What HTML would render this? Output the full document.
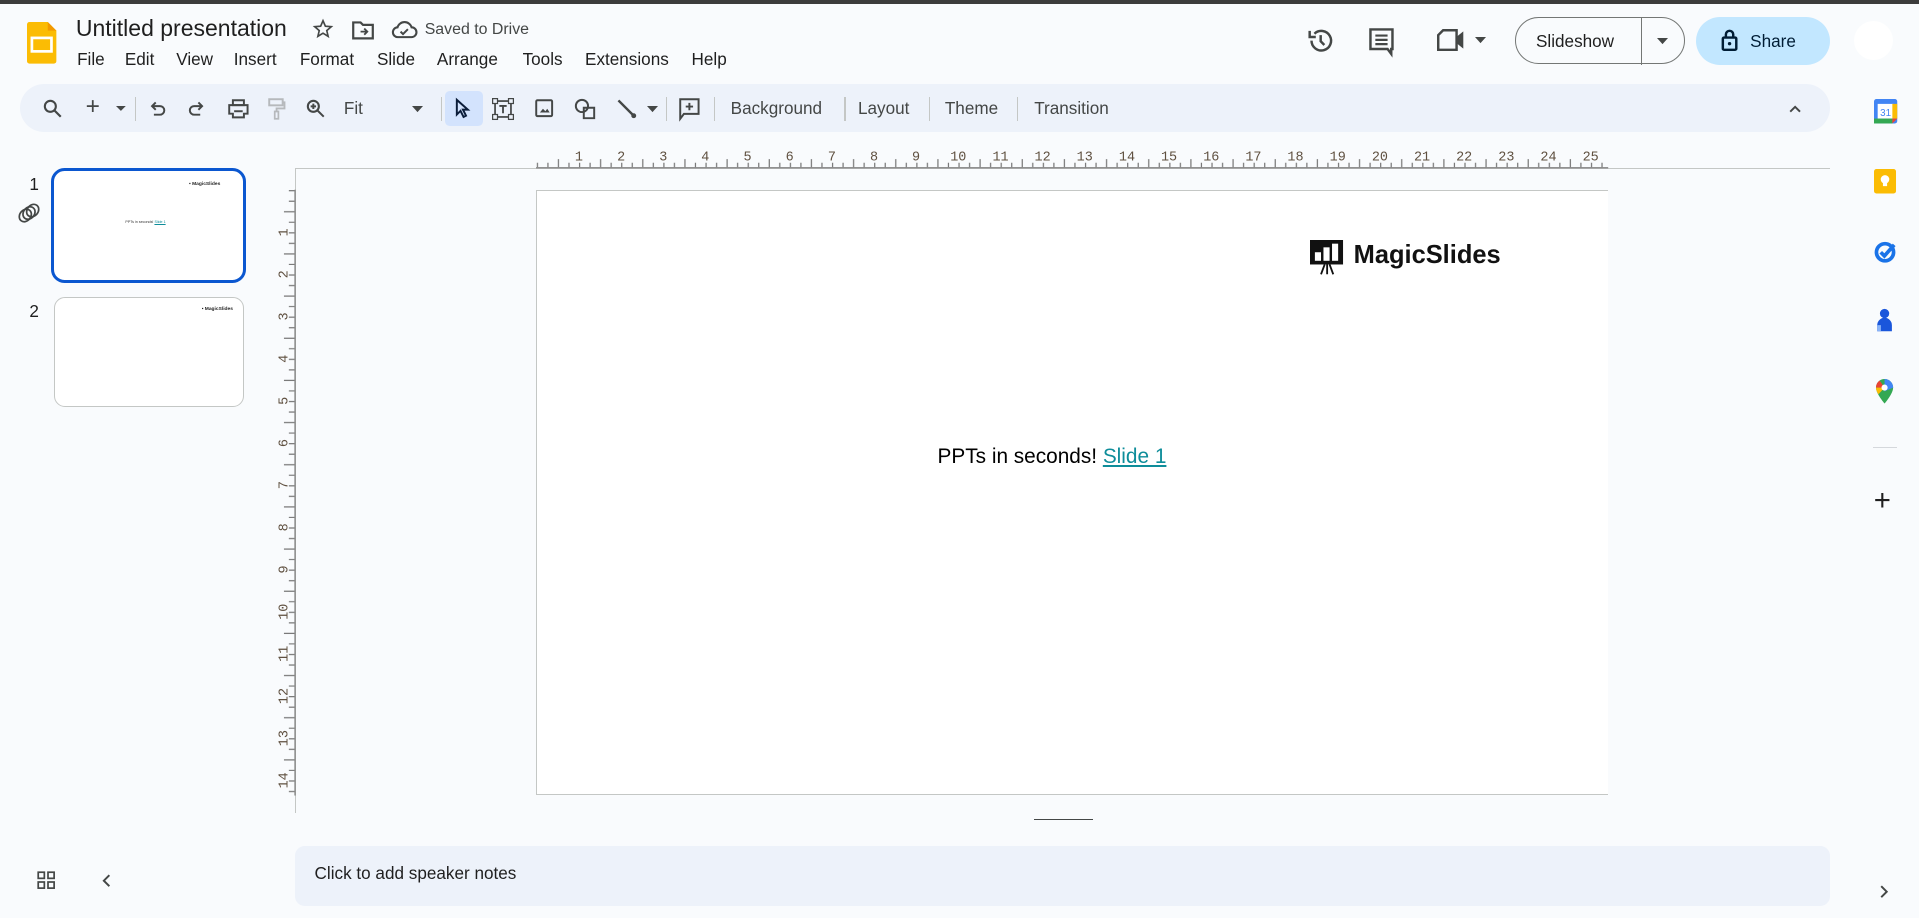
<!DOCTYPE html>
<html><head><meta charset="utf-8"><style>
html,body{margin:0;padding:0;overflow:hidden;background:#f9fbfd;}
#w{position:relative;width:1568px;height:750px;zoom:1.2239;font-family:"Liberation Sans",Arial,sans-serif;color:#1f1f1f;background:#f9fbfd;overflow:hidden}
.a{position:absolute}
.menu span{position:absolute;top:40px;font-size:14px;color:#1f1f1f}
.tb{position:absolute;left:16px;top:69px;width:1479px;height:39px;background:#edf2fa;border-radius:20px}
.dv{position:absolute;top:79px;width:1px;height:20px;background:#c4c7c5}
.tt{position:absolute;top:80px;font-size:14px;color:#444746}
svg{position:absolute;overflow:visible}
</style></head><body><div id="w">
<div class="a" style="left:0;top:0;width:1568px;height:3px;background:#3c3c3c"></div>
<svg style="left:22px;top:18px" width="24" height="34" viewBox="0 0 24 34"><path d="M0 2a2 2 0 0 1 2-2h15l7 7v25a2 2 0 0 1-2 2H2a2 2 0 0 1-2-2z" fill="#fbbc04"/><path d="M17 0v7h7z" fill="#f29900"/><rect x="4" y="13" width="16" height="11" fill="none" stroke="#fff" stroke-width="2.2"/></svg>
<div class="a" style="left:62px;top:12px;font-size:18.8px;color:#1f1f1f">Untitled presentation</div>
<svg style="left:255px;top:15px" width="18" height="18" viewBox="0 0 24 24"><path d="M12 3l2.6 6 6.4.5-4.9 4.2 1.5 6.3L12 16.6 6.4 20l1.5-6.3L3 9.5 9.4 9z" fill="none" stroke="#444746" stroke-width="1.8"/></svg>
<svg style="left:288px;top:16px" width="18" height="16" viewBox="0 0 18 16"><path d="M1 2h6l2 2h8v11H1z" fill="none" stroke="#444746" stroke-width="1.8"/><path d="M7 9.5h5M10 7l2.5 2.5L10 12" fill="none" stroke="#444746" stroke-width="1.5"/></svg>
<svg style="left:320px;top:16px" width="20" height="16" viewBox="0 0 20 16"><path d="M5 14a4 4 0 0 1-.5-8A6 6 0 0 1 16 6a4 4 0 0 1 0 8z" fill="none" stroke="#444746" stroke-width="1.7"/><path d="M7 9.5l2 2 4-4" fill="none" stroke="#444746" stroke-width="1.6"/></svg>
<div class="a" style="left:347px;top:17px;font-size:13px;color:#444746">Saved to Drive</div>
<div class="menu"><span style="left:63px">File</span><span style="left:102px">Edit</span><span style="left:144px">View</span><span style="left:191px">Insert</span><span style="left:245px">Format</span><span style="left:308px">Slide</span><span style="left:357px">Arrange</span><span style="left:427px">Tools</span><span style="left:478px">Extensions</span><span style="left:565px">Help</span></div>
<svg style="left:1067px;top:21px" width="24" height="24" viewBox="0 0 24 24"><path d="M4.5 12a8 8 0 1 0 2.4-5.7" fill="none" stroke="#444746" stroke-width="2"/><path d="M3 4v5h5" fill="none" stroke="#444746" stroke-width="2"/><path d="M12 7.5v5l3 3" fill="none" stroke="#444746" stroke-width="2"/></svg>
<svg style="left:1118px;top:22px" width="22" height="24" viewBox="0 0 22 24"><path d="M2 2h18v16h-1v4l-3-4H2z" fill="none" stroke="#444746" stroke-width="2"/><path d="M6 7h10M6 10.5h10M6 14h10" stroke="#444746" stroke-width="1.8"/></svg>
<svg style="left:1174px;top:24px" width="26" height="18" viewBox="0 0 26 18"><path d="M5 1h11v16H1V5z" fill="none" stroke="#444746" stroke-width="2"/><path d="M16 7l5-4v12l-5-4" fill="#444746" stroke="#444746" stroke-width="1"/></svg>
<svg style="left:1205px;top:30px" width="9" height="5"><path d="M0 0h9L4.5 5z" fill="#444746"/></svg>
<div class="a" style="left:1238px;top:14px;width:137px;height:37px;border:1px solid #747775;border-radius:20px"></div>
<div class="a" style="left:1341px;top:14px;width:1px;height:39px;background:#747775"></div>
<div class="a" style="left:1255px;top:25px;font-size:14px;color:#1f1f1f">Slideshow</div>
<svg style="left:1354px;top:31px" width="9" height="5"><path d="M0 0h9L4.5 5z" fill="#444746"/></svg>
<div class="a" style="left:1386px;top:14px;width:109px;height:39px;background:#c2e7ff;border-radius:20px"></div>
<svg style="left:1406px;top:24px" width="14" height="18" viewBox="0 0 14 18"><rect x="1.5" y="7" width="11" height="10" rx="1" fill="none" stroke="#001d35" stroke-width="2"/><path d="M4 7V4.5a3 3 0 0 1 6 0V7" fill="none" stroke="#001d35" stroke-width="2"/><circle cx="7" cy="12" r="1.4" fill="#001d35"/></svg>
<div class="a" style="left:1430px;top:25px;font-size:14px;color:#001d35">Share</div>
<div class="a" style="left:1515px;top:17px;width:32px;height:32px;border-radius:50%;background:#fff"></div>
<div class="tb"></div>
<svg style="left:35px;top:81px" width="16" height="16" viewBox="0 0 16 16"><circle cx="6" cy="6" r="4.5" fill="none" stroke="#444746" stroke-width="1.7"/><path d="M9.5 9.5l5 5" stroke="#444746" stroke-width="1.8"/></svg>
<div class="a" style="left:70px;top:78px;font-size:20px;color:#444746;line-height:20px">+</div>
<svg style="left:95px;top:87px" width="8" height="4"><path d="M0 0h8L4 4z" fill="#444746"/></svg>
<div class="dv" style="left:110px"></div>
<svg style="left:122px;top:82px" width="14" height="14" viewBox="0 0 14 14"><path d="M3 5h6a3.5 3.5 0 0 1 0 7H4" fill="none" stroke="#444746" stroke-width="1.6"/><path d="M5.5 2L2.5 5l3 3" fill="none" stroke="#444746" stroke-width="1.6"/></svg>
<svg style="left:154px;top:82px" width="14" height="14" viewBox="0 0 14 14"><path d="M11 5H5a3.5 3.5 0 0 0 0 7h5" fill="none" stroke="#444746" stroke-width="1.6"/><path d="M8.5 2l3 3-3 3" fill="none" stroke="#444746" stroke-width="1.6"/></svg>
<svg style="left:186px;top:81px" width="17" height="16" viewBox="0 0 17 16"><path d="M4 1h9v4H4z" fill="none" stroke="#444746" stroke-width="1.6"/><path d="M1 5h15v7h-3v3H4v-3H1z" fill="none" stroke="#444746" stroke-width="1.6"/><path d="M5 10h7" stroke="#444746" stroke-width="1.6"/></svg>
<svg style="left:219px;top:80px" width="14" height="18" viewBox="0 0 14 18"><rect x="1" y="1" width="11" height="5" fill="none" stroke="#b6b9bc" stroke-width="1.6"/><path d="M12 3.5h1.5v5H7v3" fill="none" stroke="#b6b9bc" stroke-width="1.5"/><rect x="5.5" y="11" width="3" height="6" fill="none" stroke="#b6b9bc" stroke-width="1.4"/></svg>
<svg style="left:250px;top:81px" width="16" height="16" viewBox="0 0 16 16"><circle cx="6" cy="6" r="4.5" fill="none" stroke="#444746" stroke-width="1.7"/><path d="M9.5 9.5l5 5M6 3.8v4.4M3.8 6h4.4" stroke="#444746" stroke-width="1.6"/></svg>
<div class="tt" style="left:281px;color:#444746">Fit</div>
<svg style="left:337px;top:87px" width="9" height="5"><path d="M0 0h9L4.5 5z" fill="#444746"/></svg>
<div class="dv" style="left:360px"></div>
<div class="a" style="left:364px;top:74px;width:31px;height:29px;background:#d3e3fd;border-radius:4px"></div>
<svg style="left:372px;top:80px" width="12" height="17" viewBox="0 0 12 17"><path d="M1.5 1.5v12l3-3 2.5 5 2-1-2.5-5h4z" fill="none" stroke="#0b1d3a" stroke-width="1.6"/></svg>
<svg style="left:402px;top:80px" width="18" height="18" viewBox="0 0 18 18"><rect x="2.5" y="2.5" width="13" height="13" fill="none" stroke="#444746" stroke-width="1.4"/><rect x="0.5" y="0.5" width="4" height="4" fill="#edf2fa" stroke="#444746"/><rect x="13.5" y="0.5" width="4" height="4" fill="#edf2fa" stroke="#444746"/><rect x="0.5" y="13.5" width="4" height="4" fill="#edf2fa" stroke="#444746"/><rect x="13.5" y="13.5" width="4" height="4" fill="#edf2fa" stroke="#444746"/><path d="M6 6.5h6M9 6.5v6" stroke="#444746" stroke-width="1.5"/></svg>
<svg style="left:437px;top:81px" width="15" height="15" viewBox="0 0 15 15"><rect x="1" y="1" width="13" height="13" rx="1" fill="none" stroke="#444746" stroke-width="1.6"/><path d="M4 11l2.5-3 2 2 1.5-2 2 3z" fill="#444746"/></svg>
<svg style="left:469px;top:80px" width="18" height="18" viewBox="0 0 18 18"><circle cx="6.5" cy="6.5" r="5" fill="none" stroke="#444746" stroke-width="1.6"/><path d="M8 11.5V8h8.5v8.5H8z" fill="none" stroke="#444746" stroke-width="1.6"/></svg>
<svg style="left:503px;top:80px" width="17" height="17" viewBox="0 0 17 17"><path d="M2 2l13 13" stroke="#444746" stroke-width="2"/><circle cx="14.5" cy="14.5" r="2" fill="#444746"/></svg>
<svg style="left:529px;top:87px" width="9" height="5"><path d="M0 0h9L4.5 5z" fill="#444746"/></svg>
<div class="dv" style="left:544px"></div>
<svg style="left:555px;top:80px" width="17" height="18" viewBox="0 0 17 18"><path d="M1 1h15v12H4l-3 4z" fill="none" stroke="#444746" stroke-width="1.6"/><path d="M8.5 4v6M5.5 7h6" stroke="#444746" stroke-width="1.6"/></svg>
<div class="dv" style="left:583px"></div>
<div class="tt" style="left:597px">Background</div>
<div class="dv" style="left:690px"></div>
<div class="tt" style="left:701px">Layout</div>
<div class="dv" style="left:759px"></div>
<div class="tt" style="left:772px">Theme</div>
<div class="dv" style="left:831px"></div>
<div class="tt" style="left:845px">Transition</div>
<svg style="left:1462px;top:86px" width="10" height="6"><path d="M1 5.5L5 1.5l4 4" fill="none" stroke="#444746" stroke-width="1.6"/></svg>
<svg style="left:1531px;top:81px" width="19" height="20" viewBox="0 0 19 20"><rect x="0" y="0" width="19" height="20" rx="2" fill="#4285f4"/><rect x="3" y="4" width="13" height="12" fill="#fff"/><rect x="0" y="16" width="15" height="4" fill="#34a853"/><rect x="15" y="4" width="4" height="12" fill="#fbbc04"/><path d="M15 16h4l-4 4z" fill="#ea4335"/><text x="9.5" y="14" font-size="8" text-anchor="middle" fill="#4285f4" font-family="Liberation Sans">31</text></svg>
<svg style="left:1531px;top:138px" width="18" height="20" viewBox="0 0 18 20"><rect width="18" height="20" rx="2" fill="#fbbc04"/><circle cx="9" cy="8.5" r="3.5" fill="#fff"/><rect x="7.3" y="11.5" width="3.4" height="2.5" fill="#fff"/></svg>
<svg style="left:1531px;top:196px" width="19" height="19" viewBox="0 0 19 19"><circle cx="9" cy="10" r="7" fill="none" stroke="#1a73e8" stroke-width="3"/><path d="M5.5 10l3 3 8-9" fill="none" stroke="#1a73e8" stroke-width="3"/></svg>
<svg style="left:1533px;top:252px" width="14" height="20" viewBox="0 0 14 20"><circle cx="7" cy="4.5" r="3.8" fill="#1a56db"/><path d="M1 19v-5a5 5 0 0 1 12 0v5z" fill="#1a56db"/><path d="M1 14h3v5H1z" fill="#8ab4f8"/></svg>
<svg style="left:1533px;top:310px" width="14" height="20" viewBox="0 0 14 20"><path d="M7 0a7 7 0 0 1 7 7c0 5-7 13-7 13S0 12 0 7a7 7 0 0 1 7-7z" fill="#34a853"/><path d="M7 0a7 7 0 0 1 7 7l-7 3z" fill="#4285f4"/><path d="M0 7a7 7 0 0 1 3-5.7L7 7z" fill="#ea4335"/><path d="M0 7c0 2 1 4 2 5.5L7 7z" fill="#fbbc04"/><circle cx="7" cy="7" r="2.5" fill="#fff"/></svg>
<div class="a" style="left:1530px;top:365px;width:20px;height:1px;background:#d5d8dc"></div>
<div class="a" style="left:1531px;top:397px;font-size:24px;line-height:24px;color:#1f1f1f">+</div>
<svg style="left:1536px;top:723px" width="7" height="11"><path d="M1 1l4.5 4.5L1 10" fill="none" stroke="#444746" stroke-width="1.6"/></svg>
<div class="a" style="left:24px;top:142px;font-size:14px">1</div>
<svg style="left:15px;top:165px" width="18" height="18" viewBox="0 0 18 18"><g fill="none" stroke="#444746" stroke-width="1.4"><ellipse cx="6" cy="11" rx="4.5" ry="5.5" transform="rotate(40 6 11)"/><ellipse cx="9" cy="9" rx="4.5" ry="5.5" transform="rotate(40 9 9)"/><ellipse cx="12" cy="7" rx="4.5" ry="5.5" transform="rotate(40 12 7)"/></g></svg>
<div class="a" style="left:42px;top:137px;width:154px;height:89px;border:2.5px solid #0b57d0;border-radius:11px;background:#fff;overflow:hidden">
<div class="a" style="left:110px;top:9px;font-size:4px;font-weight:bold">▪ MagicSlides</div>
<div class="a" style="left:58px;top:40px;font-size:3px;color:#333">PPTs in seconds! <span style="color:#0e8d9a;text-decoration:underline">Slide 1</span></div></div>
<div class="a" style="left:24px;top:246px;font-size:14px">2</div>
<div class="a" style="left:44px;top:243px;width:154px;height:88px;border:1px solid #c4c7c5;border-radius:9px;background:#fff;overflow:hidden">
<div class="a" style="left:120px;top:7px;font-size:4px;font-weight:bold">▪ MagicSlides</div></div>
<div class="a" style="left:241px;top:137px;width:1254px;height:1px;background:#c4c7c5"></div>
<div class="a" style="left:241px;top:137px;width:1px;height:527px;background:#c4c7c5"></div>
<div class="a" style="left:438px;top:155px;width:875px;height:493px;background:#fff;border:1px solid #c4c7c5;border-right:none"></div>
<svg style="left:1070px;top:196px" width="28" height="28" viewBox="0 0 28 28"><rect x="0" y="0" width="27" height="20" fill="#111"/><rect x="4" y="10" width="5" height="7" fill="#fff"/><rect x="11" y="6" width="5" height="11" fill="#fff"/><rect x="18" y="3" width="5" height="14" fill="#fff"/><path d="M12 20l-3 8M14 20v8M16 20l3 8" stroke="#111" stroke-width="1.5"/></svg>
<div class="a" style="left:1106px;top:197px;font-size:20.8px;font-weight:bold;color:#111">MagicSlides</div>
<div class="a" style="left:766px;top:364px;font-size:17px;color:#000">PPTs in seconds! <span style="color:#0e8d9a;text-decoration:underline">Slide 1</span></div>
<svg style="left:0;top:0" width="1568" height="750">
<defs>
<pattern id="ph" x="438.6" y="0" width="34.45" height="750" patternUnits="userSpaceOnUse"><path d="M0.5 133v4M9.1 133v4M17.7 130v7M26.3 133v4" stroke="#777" stroke-width="1"/></pattern>
<pattern id="pv" x="0" y="155.3" width="750" height="34.45" patternUnits="userSpaceOnUse"><path d="M236 0.5h5M236 9.1h5M232 17.7h9M236 26.3h5" stroke="#777" stroke-width="1"/></pattern>
</defs>
<rect x="438" y="125" width="876" height="12" fill="url(#ph)"/>
<rect x="438" y="136.5" width="876" height="1.2" fill="#8a8a8a"/>
<rect x="228" y="155" width="13" height="495" fill="url(#pv)"/>
<rect x="240.5" y="155" width="1.2" height="495" fill="#8a8a8a"/>
<g font-family="Liberation Mono,monospace" font-size="11" fill="#5f5040" text-anchor="middle">
<text x="473" y="131">1</text><text x="507.5" y="131">2</text><text x="541.9" y="131">3</text><text x="576.3" y="131">4</text><text x="610.8" y="131">5</text><text x="645.2" y="131">6</text><text x="679.7" y="131">7</text><text x="714.1" y="131">8</text><text x="748.5" y="131">9</text><text x="783" y="131">10</text><text x="817.5" y="131">11</text><text x="851.9" y="131">12</text><text x="886.3" y="131">13</text><text x="920.8" y="131">14</text><text x="955.2" y="131">15</text><text x="989.7" y="131">16</text><text x="1024.1" y="131">17</text><text x="1058.5" y="131">18</text><text x="1093" y="131">19</text><text x="1127.5" y="131">20</text><text x="1161.9" y="131">21</text><text x="1196.3" y="131">22</text><text x="1230.8" y="131">23</text><text x="1265.2" y="131">24</text><text x="1299.7" y="131">25</text>
</g>
<g font-family="Liberation Mono,monospace" font-size="11" fill="#5f5040" text-anchor="middle">
<text transform="translate(235 189.8) rotate(-90)">1</text><text transform="translate(235 224.2) rotate(-90)">2</text><text transform="translate(235 258.6) rotate(-90)">3</text><text transform="translate(235 293.1) rotate(-90)">4</text><text transform="translate(235 327.5) rotate(-90)">5</text><text transform="translate(235 362) rotate(-90)">6</text><text transform="translate(235 396.4) rotate(-90)">7</text><text transform="translate(235 430.9) rotate(-90)">8</text><text transform="translate(235 465.3) rotate(-90)">9</text><text transform="translate(235 499.8) rotate(-90)">10</text><text transform="translate(235 534.2) rotate(-90)">11</text><text transform="translate(235 568.7) rotate(-90)">12</text><text transform="translate(235 603.1) rotate(-90)">13</text><text transform="translate(235 637.6) rotate(-90)">14</text>
</g>
</svg>
<div class="a" style="left:845px;top:669px;width:48px;height:1px;background:#444746"></div>
<div class="a" style="left:241px;top:691px;width:1254px;height:49px;background:#edf2fa;border-radius:8px"></div>
<div class="a" style="left:257px;top:705px;font-size:14px;color:#1f1f1f">Click to add speaker notes</div>
<svg style="left:30px;top:712px" width="15" height="15" viewBox="0 0 15 15"><g fill="none" stroke="#444746" stroke-width="1.4"><rect x="1" y="1" width="5" height="5"/><rect x="9" y="1" width="5" height="5"/><rect x="1" y="9" width="5" height="5"/><rect x="9" y="9" width="5" height="5"/></g></svg>
<svg style="left:83px;top:714px" width="7" height="11"><path d="M6 1L1.5 5.5 6 10" fill="none" stroke="#444746" stroke-width="1.6"/></svg>
</div></body></html>
